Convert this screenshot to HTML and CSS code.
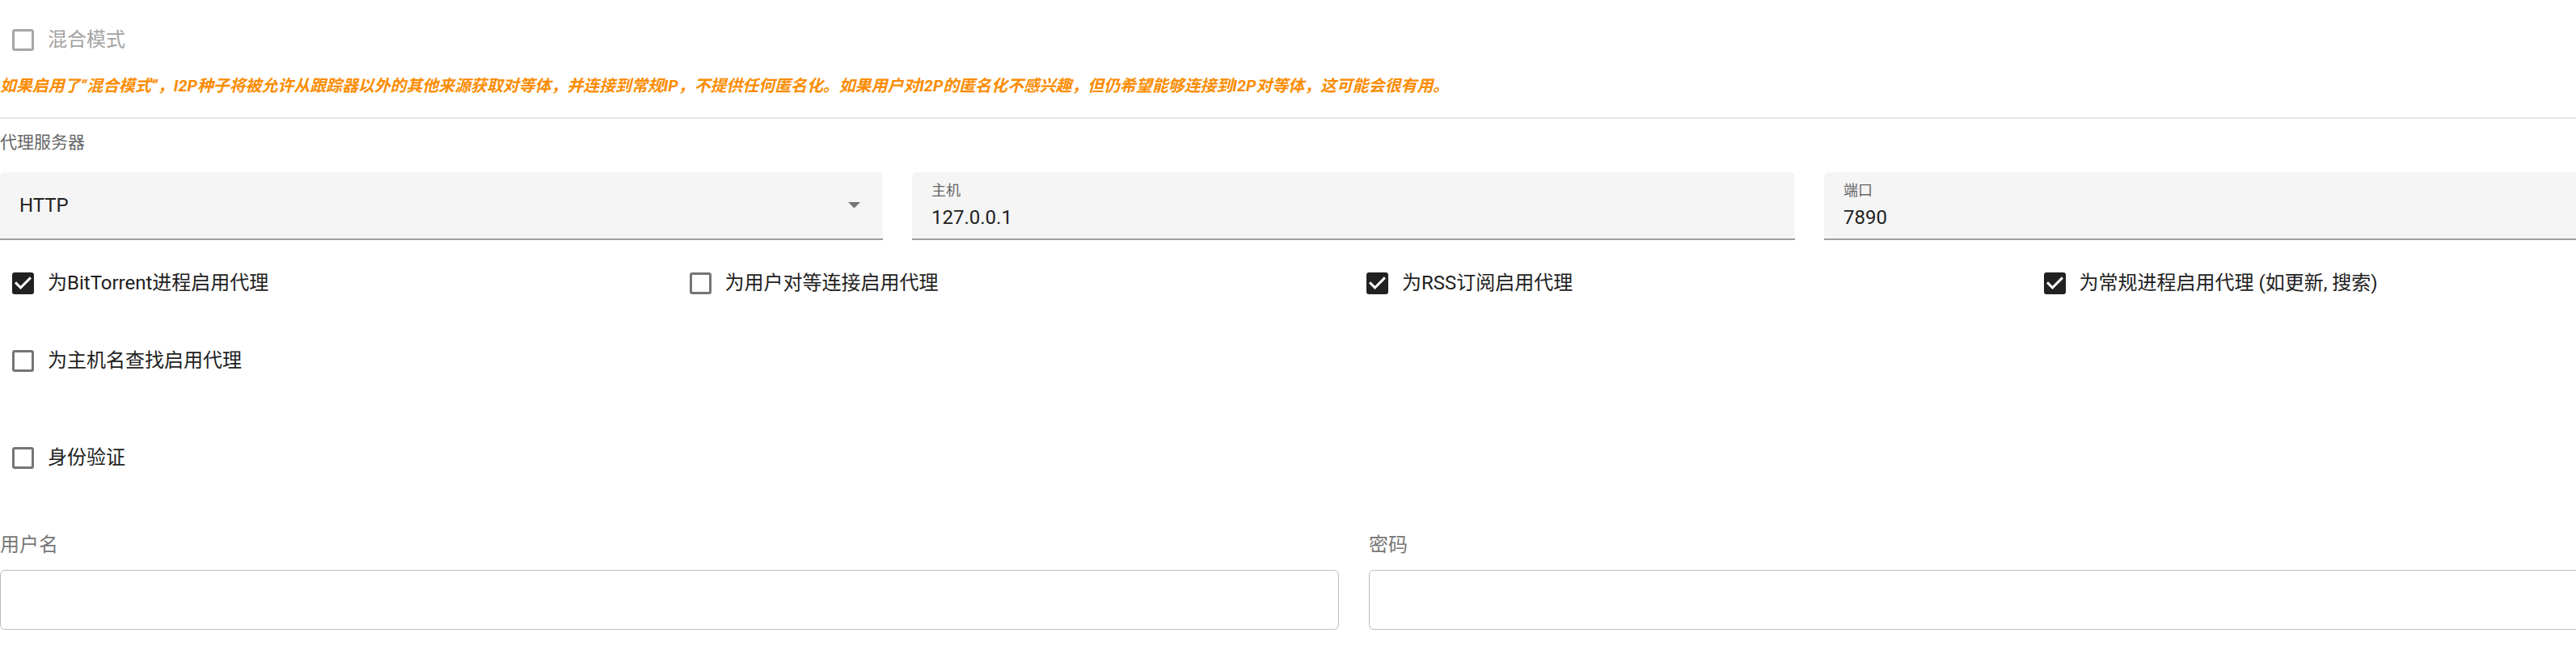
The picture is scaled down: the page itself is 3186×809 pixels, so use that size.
FILE: index.html
```html
<!DOCTYPE html>
<html lang="zh-CN">
<head>
<meta charset="utf-8">
<title>代理服务器设置</title>
<link rel="stylesheet" href="styles.css">
</head>
<body>
<div class="page">
  <div class="check check-disabled mixed">
    <svg class="box" viewBox="3 3 18 18"><path d="M19,3H5C3.89,3 3,3.89 3,5V19A2,2 0 0,0 5,21H19A2,2 0 0,0 21,19V5C21,3.89 20.1,3 19,3M19,5V19H5V5H19Z"/></svg>
    <span class="check-label">混合模式</span>
  </div>
  <p class="hint">如果启用了“混合模式”，I2P种子将被允许从跟踪器以外的其他来源获取对等体，并连接到常规IP，不提供任何匿名化。如果用户对I2P的匿名化不感兴趣，但仍希望能够连接到I2P对等体，这可能会很有用。</p>
  <div class="divider"></div>
  <div class="section-title">代理服务器</div>
  <div class="fields">
    <div class="field field-select">
      <span class="field-value">HTTP</span>
      <svg class="arrow" viewBox="7 10 10 5"><path d="M7,10L12,15L17,10H7Z"/></svg>
    </div>
    <div class="field">
      <span class="field-label">主机</span>
      <span class="field-value">127.0.0.1</span>
    </div>
    <div class="field">
      <span class="field-label">端口</span>
      <span class="field-value">7890</span>
    </div>
  </div>
  <div class="checks">
    <div class="check">
      <svg class="box box-on" viewBox="3 3 18 18"><path d="M10,17L5,12L6.41,10.58L10,14.17L17.59,6.58L19,8M19,3H5C3.89,3 3,3.89 3,5V19A2,2 0 0,0 5,21H19A2,2 0 0,0 21,19V5C21,3.89 20.1,3 19,3Z"/></svg>
      <span class="check-label">为BitTorrent进程启用代理</span>
    </div>
    <div class="check">
      <svg class="box" viewBox="3 3 18 18"><path d="M19,3H5C3.89,3 3,3.89 3,5V19A2,2 0 0,0 5,21H19A2,2 0 0,0 21,19V5C21,3.89 20.1,3 19,3M19,5V19H5V5H19Z"/></svg>
      <span class="check-label">为用户对等连接启用代理</span>
    </div>
    <div class="check">
      <svg class="box box-on" viewBox="3 3 18 18"><path d="M10,17L5,12L6.41,10.58L10,14.17L17.59,6.58L19,8M19,3H5C3.89,3 3,3.89 3,5V19A2,2 0 0,0 5,21H19A2,2 0 0,0 21,19V5C21,3.89 20.1,3 19,3Z"/></svg>
      <span class="check-label">为RSS订阅启用代理</span>
    </div>
    <div class="check">
      <svg class="box box-on" viewBox="3 3 18 18"><path d="M10,17L5,12L6.41,10.58L10,14.17L17.59,6.58L19,8M19,3H5C3.89,3 3,3.89 3,5V19A2,2 0 0,0 5,21H19A2,2 0 0,0 21,19V5C21,3.89 20.1,3 19,3Z"/></svg>
      <span class="check-label">为常规进程启用代理 (如更新, 搜索)</span>
    </div>
    <div class="check">
      <svg class="box" viewBox="3 3 18 18"><path d="M19,3H5C3.89,3 3,3.89 3,5V19A2,2 0 0,0 5,21H19A2,2 0 0,0 21,19V5C21,3.89 20.1,3 19,3M19,5V19H5V5H19Z"/></svg>
      <span class="check-label">为主机名查找启用代理</span>
    </div>
  </div>
  <div class="check auth">
    <svg class="box" viewBox="3 3 18 18"><path d="M19,3H5C3.89,3 3,3.89 3,5V19A2,2 0 0,0 5,21H19A2,2 0 0,0 21,19V5C21,3.89 20.1,3 19,3M19,5V19H5V5H19Z"/></svg>
    <span class="check-label">身份验证</span>
  </div>
  <div class="creds">
    <div class="cred">
      <div class="cred-label">用户名</div>
      <div class="cred-box"></div>
    </div>
    <div class="cred">
      <div class="cred-label">密码</div>
      <div class="cred-box"></div>
    </div>
  </div>
</div>
</body>
</html>
```

FILE: styles.css
```css
html, body {
  margin: 0;
  padding: 0;
  background: #ffffff;
  overflow: hidden;
}

body {
  font-family: Roboto, "Noto Sans CJK SC", sans-serif;
  color: #212121;
}

.page {
  width: 3386px;
  display: flex;
  flex-direction: column;
}

.check {
  display: flex;
  align-items: center;
  height: 27px;
  padding-left: 15px;
  gap: 17px;
}

.box {
  width: 27px;
  height: 27px;
  flex: none;
  fill: #757575;
}

.box-on {
  fill: #212121;
}

.check-label {
  font-size: 24px;
  line-height: 27px;
  white-space: nowrap;
  color: #212121;
}

.check-disabled .box {
  fill: #a6a6a6;
}

.check-disabled .check-label {
  color: #a3a3a3;
}

.mixed {
  margin-top: 36px;
}

.hint {
  margin: 30px 0 0 0;
  font-size: 19.9px;
  line-height: 28px;
  font-weight: 700;
  font-style: italic;
  color: #fb8c00;
  white-space: nowrap;
}

.divider {
  margin-top: 24px;
  height: 2px;
  background: #e6e6e6;
}

.section-title {
  margin-top: 15px;
  font-size: 21px;
  line-height: 28px;
  color: #666666;
}

.fields {
  margin-top: 23px;
  display: grid;
  grid-template-columns: repeat(3, 1092px);
  column-gap: 36px;
}

.field {
  box-sizing: border-box;
  height: 84px;
  background: #f5f5f5;
  border-radius: 6px 6px 0 0;
  border-bottom: 2px solid #9e9e9e;
  padding: 0 24px;
  display: flex;
  flex-direction: column;
}

.field-select {
  flex-direction: row;
  align-items: center;
  justify-content: space-between;
  padding-right: 28px;
}

.field-label {
  margin-top: 11px;
  font-size: 18px;
  line-height: 24px;
  color: #666666;
}

.field-value {
  font-size: 24px;
  line-height: 28px;
  color: #212121;
}

.field .field-label + .field-value {
  margin-top: 7px;
}

.arrow {
  width: 15px;
  height: 7.5px;
  fill: #757575;
}

.checks {
  margin-top: 40px;
  display: grid;
  grid-template-columns: repeat(4, 837.5px);
  row-gap: 69px;
}

.auth {
  margin-top: 93px;
}

.creds {
  margin-top: 80px;
  display: grid;
  grid-template-columns: repeat(2, 1656px);
  column-gap: 37px;
}

.cred-label {
  font-size: 24px;
  line-height: 28px;
  color: #777777;
}

.cred-box {
  margin-top: 17px;
  box-sizing: border-box;
  height: 74px;
  border: 1.5px solid #bdbdbd;
  border-radius: 6px;
}
```
